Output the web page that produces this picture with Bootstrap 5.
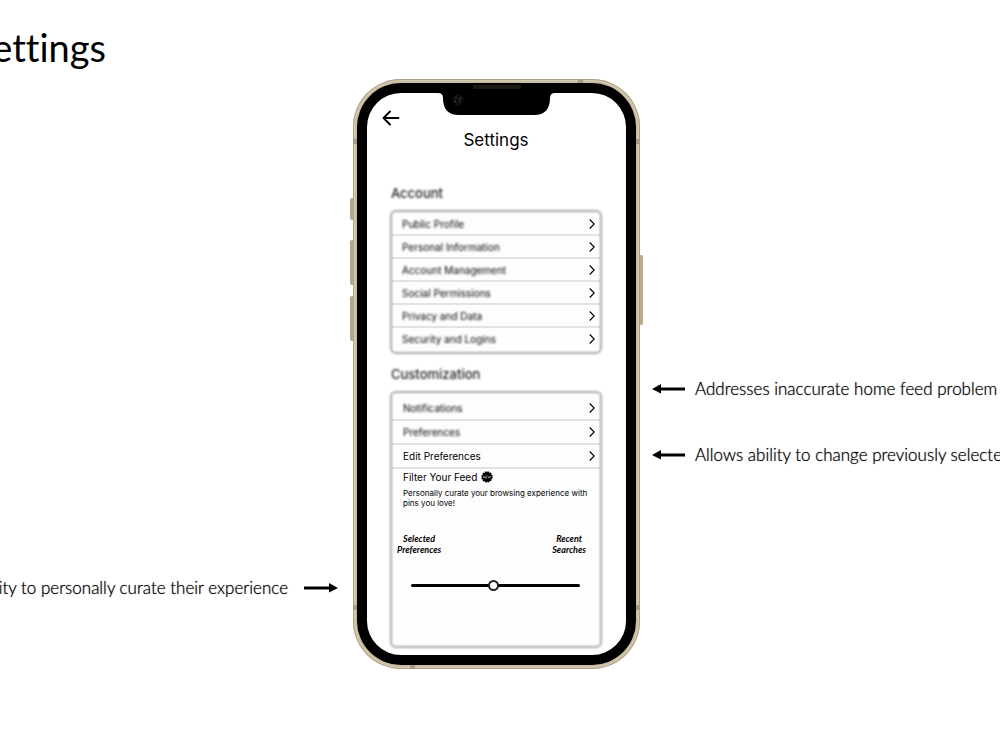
<!DOCTYPE html>
<html lang="en">
<head>
<meta charset="utf-8">
<meta name="viewport" content="width=device-width, initial-scale=1">
<title>Settings</title>
<link href="https://cdn.jsdelivr.net/npm/bootstrap@5.3.0/dist/css/bootstrap.min.css" rel="stylesheet">
<style>
  body { font-family: Lato, "Liberation Sans", sans-serif; font-variant-ligatures: none; color: #000; background: #fff; overflow-x: hidden; }
  .page-title { font-size: 38px; font-weight: 400; line-height: 48px; width: 106px; padding-top: 23px; height: 79px; white-space: nowrap; }
  .stage { display: grid; grid-template-columns: minmax(0, 1fr) 287px minmax(0, 1fr); padding-right: 7px; }
  .note { font-size: 17px; line-height: 24px; font-weight: 300; text-shadow: 0 0 1px rgba(0, 0, 0, .7); white-space: nowrap; }
  .notes-left { padding: 497px 15px 0 0; }
  .notes-right { padding: 298px 0 0 12px; margin-right: -7px; }
  .notes-right .note { gap: 10px; margin-bottom: 42px; }

  /* phone body */
  .phone { position: relative; padding: 4px; border-radius: 48px; background: #c9bca0; box-shadow: inset 0 0 1px 1px #a99b80, inset 0 0 1px 2px #ddd3bd; }
  .bezel { padding: 10px; border-radius: 44px; background: #000; }
  .screen { position: relative; border-radius: 34px; background: #fff; padding: 16px 24px 7px 23px; font-family: Inter, "Liberation Sans", sans-serif; }
  .notch { position: absolute; left: 70px; top: -9px; }
  .side-key { position: absolute; left: -3px; width: 3px; background: #b3a78f; border-radius: 2px 0 0 2px; }
  .side-key.key-r { border-radius: 0 2px 2px 0; left: auto; right: -3px; background: #bba98a; }
  .band { position: absolute; width: 4px; height: 5px; background: #a59a84; }
  .band.flat { width: 5px; height: 4px; }

  .back-btn { width: 18px; height: 18px; margin-left: -8px; }
  .screen-title { font-size: 17px; line-height: 24px; font-weight: 400; margin: 1px 0 31px; }
  .group-title { font-size: 13px; line-height: 20px; font-weight: 500; color: #222; margin: 0 0 7px; padding-left: 1px; }
  .soft { filter: blur(1px); }
  .panel { position: relative; background: #fdfdfd; border-radius: 6px; padding: 3px 2px; height: 144px; margin-bottom: 10px; }
  .panel.tall { height: 257px; margin-bottom: 0; padding-top: 6px; }
  .panel::before { content: ""; position: absolute; inset: 0; border: 2px solid #a8a8a8; border-radius: 6px; filter: blur(1px); pointer-events: none; }
  .item { height: 23px; padding: 0 5px 0 10px; font-size: 10px; line-height: 20px; color: #000; text-decoration: none; border-bottom: 2px solid #e2e2e2; }
  .tall .item { height: 24px; padding-left: 11px; }
  .item svg { width: 6px; height: 10px; fill: none; stroke: #000; stroke-width: 1.100; }
  .plain .item:last-child { border-bottom-color: transparent; }
  .feed { padding: 0 10px 0 11px; }
  .feed h4 { font-size: 10px; line-height: 16px; font-weight: 400; margin: 0 0 3px; }
  .blurb { font-size: 8px; line-height: 10px; margin: 0 -4px 25px 0; }
  .ends { margin: 0 4px 25px -6px; }
  .end-label { font-family: Lato, sans-serif; font-style: italic; font-weight: 700; font-size: 9px; line-height: 11px; text-align: center; }
  .mix { -webkit-appearance: none; appearance: none; width: 169px; height: 10px; margin: 0 0 0 8px; background: transparent; display: block; }
  .mix::-webkit-slider-runnable-track { height: 3px; background: #000; border-radius: 2px; }
  .mix::-webkit-slider-thumb { -webkit-appearance: none; width: 11px; height: 11px; margin-top: -4px; border: 2px solid #222; border-radius: 50%; background: #fff; }
</style>
</head>
<body>
<svg class="d-none">
  <symbol id="chev" viewBox="0 0 6 10"><path d="M.7.500L5.200 5L.7 9.500"/></symbol>
  <symbol id="arrow-l" viewBox="0 0 33 10"><path d="M33 3.500H9V0L0 5L9 9.500V6.500H33Z"/></symbol>
</svg>
<header><h1 class="page-title d-flex justify-content-end mb-0">ettings</h1></header>
<main class="stage">
  <aside class="notes-left">
    <div class="note d-flex justify-content-end align-items-center gap-3">
      <span>ity to personally curate their experience</span>
      <svg class="flex-shrink-0" width="34" height="10" viewBox="0 0 34 10"><path d="M0 3.500H25V0L34 5L25 9.500V6.500H0Z"/></svg>
    </div>
  </aside>

  <section class="phone">
    <span class="side-key" style="top:119px;height:22px"></span>
    <span class="side-key" style="top:161px;height:45px"></span>
    <span class="side-key" style="top:217px;height:45px"></span>
    <span class="side-key key-r" style="top:176px;height:70px"></span>
    <span class="band flat" style="left:225px;top:0"></span>
    <span class="band flat" style="left:57px;bottom:0"></span>
    <span class="band" style="left:0;top:60px"></span>
    <span class="band" style="right:0;top:60px"></span>
    <span class="band" style="left:0;top:526px"></span>
    <span class="band" style="right:0;top:526px"></span>
    <div class="bezel">
      <div class="screen">
        <svg class="notch" width="120" height="32" viewBox="0 0 120 32"><path d="M0 8H120V9H118Q113 9 113 14C113 25 108 31 97 31H22C11 31 6 25 6 14Q6 9 1 9H0Z"/><rect x="36" y="1" width="48" height="4" rx="1" fill="#1b1814"/><circle cx="21" cy="16" r="6" fill="#0c0c0c"/><path d="M18 14l2-1M18 16l1 3M22 14l1 4M23 13l2 2" stroke="#3c3c3c" fill="none"/></svg>
        <button class="back-btn btn border-0 p-0 d-block" aria-label="Back"><svg class="d-block" width="18" height="18" viewBox="0 0 18 18" fill="none" stroke="#000" stroke-width="1.900" stroke-linecap="round" stroke-linejoin="round"><path d="M16.500 9H1.500M8 2.500L1.500 9L8 15.500"/></svg></button>
        <h2 class="screen-title text-center">Settings</h2>

        <h3 class="group-title soft">Account</h3>
        <nav class="panel plain">
          <a href="#" class="item d-flex justify-content-between align-items-center"><span class="soft">Public Profile</span><svg><use href="#chev"/></svg></a>
          <a href="#" class="item d-flex justify-content-between align-items-center"><span class="soft">Personal Information</span><svg><use href="#chev"/></svg></a>
          <a href="#" class="item d-flex justify-content-between align-items-center"><span class="soft">Account Management</span><svg><use href="#chev"/></svg></a>
          <a href="#" class="item d-flex justify-content-between align-items-center"><span class="soft">Social Permissions</span><svg><use href="#chev"/></svg></a>
          <a href="#" class="item d-flex justify-content-between align-items-center"><span class="soft">Privacy and Data</span><svg><use href="#chev"/></svg></a>
          <a href="#" class="item d-flex justify-content-between align-items-center"><span class="soft">Security and Logins</span><svg><use href="#chev"/></svg></a>
        </nav>

        <h3 class="group-title soft">Customization</h3>
        <div class="panel tall">
          <a href="#" class="item d-flex justify-content-between align-items-center"><span class="soft">Notifications</span><svg><use href="#chev"/></svg></a>
          <a href="#" class="item d-flex justify-content-between align-items-center"><span class="soft">Preferences</span><svg><use href="#chev"/></svg></a>
          <a href="#" class="item d-flex justify-content-between align-items-center"><span>Edit Preferences</span><svg><use href="#chev"/></svg></a>
          <div class="feed">
            <h4 class="d-flex align-items-center gap-1"><label for="mix">Filter Your Feed</label>
              <svg width="12" height="12" viewBox="0 0 12 12" aria-hidden="true"><circle cx="6" cy="6" r="5"/><circle cx="6" cy="6" r="5" fill="none" stroke="#000" stroke-width="1.400" stroke-dasharray="1.600 1"/><path d="M2.500 7.300V4.900L4 7.300V4.900M6.300 5H5V7.200H6.300M5 6.100H6M7 4.900L7.700 7.200L8.300 5.300L8.900 7.200L9.600 4.900" fill="none" stroke="#bbb" stroke-width=".5"/></svg>
            </h4>
            <p class="blurb">Personally curate your browsing experience with pins you love!</p>
            <div class="ends d-flex justify-content-between">
              <div class="end-label">Selected<br>Preferences</div>
              <div class="end-label">Recent<br>Searches</div>
            </div>
            <input id="mix" class="mix" type="range" min="0" max="100" value="49">
          </div>
        </div>
      </div>
    </div>
  </section>

  <aside class="notes-right">
    <div class="note d-flex align-items-center">
      <svg class="flex-shrink-0" width="33" height="10"><use href="#arrow-l"/></svg>
      <span>Addresses inaccurate home feed problem</span>
    </div>
    <div class="note d-flex align-items-center">
      <svg class="flex-shrink-0" width="33" height="10"><use href="#arrow-l"/></svg>
      <span>Allows ability to change previously selecte</span>
    </div>
  </aside>
</main>
<script src="https://cdn.jsdelivr.net/npm/bootstrap@5.3.0/dist/js/bootstrap.bundle.min.js"></script>
</body>
</html>
